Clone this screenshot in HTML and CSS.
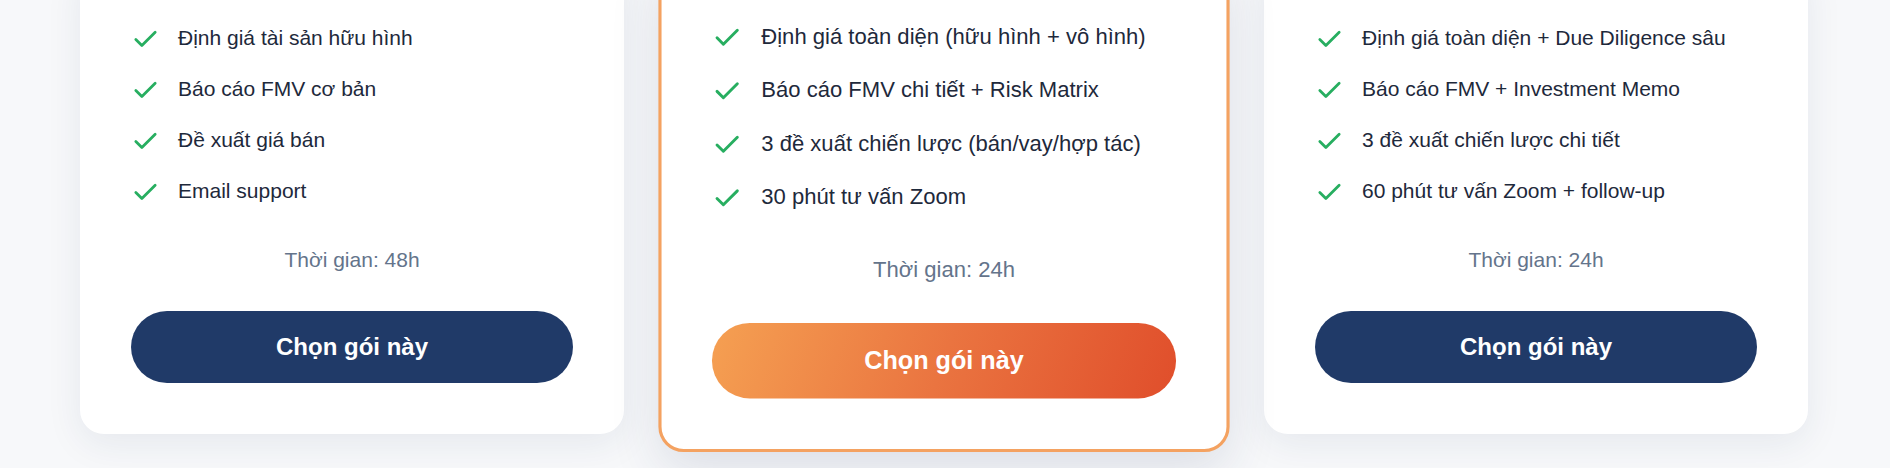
FILE: index.html
```html
<!DOCTYPE html>
<html lang="vi">
<head>
<meta charset="utf-8">
<title>Bảng giá</title>
<link rel="stylesheet" href="styles.css">
</head>
<body>
<section class="pricing">
  <div class="grid">
    <div class="card">
      <ul class="features">
        <li><svg class="check" viewBox="0 0 24 24"><path d="M20 6 9 17l-5-5"/></svg><span>Định giá tài sản hữu hình</span></li>
        <li><svg class="check" viewBox="0 0 24 24"><path d="M20 6 9 17l-5-5"/></svg><span>Báo cáo FMV cơ bản</span></li>
        <li><svg class="check" viewBox="0 0 24 24"><path d="M20 6 9 17l-5-5"/></svg><span>Đề xuất giá bán</span></li>
        <li><svg class="check" viewBox="0 0 24 24"><path d="M20 6 9 17l-5-5"/></svg><span>Email support</span></li>
      </ul>
      <p class="time">Thời gian: 48h</p>
      <button class="btn">Chọn gói này</button>
    </div>
    <div class="card featured">
      <ul class="features">
        <li><svg class="check" viewBox="0 0 24 24"><path d="M20 6 9 17l-5-5"/></svg><span>Định giá toàn diện (hữu hình + vô hình)</span></li>
        <li><svg class="check" viewBox="0 0 24 24"><path d="M20 6 9 17l-5-5"/></svg><span>Báo cáo FMV chi tiết + Risk Matrix</span></li>
        <li><svg class="check" viewBox="0 0 24 24"><path d="M20 6 9 17l-5-5"/></svg><span>3 đề xuất chiến lược (bán/vay/hợp tác)</span></li>
        <li><svg class="check" viewBox="0 0 24 24"><path d="M20 6 9 17l-5-5"/></svg><span>30 phút tư vấn Zoom</span></li>
      </ul>
      <p class="time">Thời gian: 24h</p>
      <button class="btn btn-accent">Chọn gói này</button>
    </div>
    <div class="card">
      <ul class="features">
        <li><svg class="check" viewBox="0 0 24 24"><path d="M20 6 9 17l-5-5"/></svg><span>Định giá toàn diện + Due Diligence sâu</span></li>
        <li><svg class="check" viewBox="0 0 24 24"><path d="M20 6 9 17l-5-5"/></svg><span>Báo cáo FMV + Investment Memo</span></li>
        <li><svg class="check" viewBox="0 0 24 24"><path d="M20 6 9 17l-5-5"/></svg><span>3 đề xuất chiến lược chi tiết</span></li>
        <li><svg class="check" viewBox="0 0 24 24"><path d="M20 6 9 17l-5-5"/></svg><span>60 phút tư vấn Zoom + follow-up</span></li>
      </ul>
      <p class="time">Thời gian: 24h</p>
      <button class="btn">Chọn gói này</button>
    </div>
  </div>
</section>
</body>
</html>
```

FILE: styles.css
```css
* {
  box-sizing: border-box;
}

html, body {
  margin: 0;
  padding: 0;
}

body {
  background: #f7f8fa;
  font-family: "Liberation Sans", Arial, sans-serif;
  color: #1e293b;
  overflow: hidden;
  height: 468px;
}

.pricing {
  padding: 0 82px 0 80px;
}

.grid {
  display: grid;
  grid-template-columns: repeat(3, 1fr);
  gap: 48px;
  margin-top: -39px;
}

.card {
  background: #ffffff;
  border: 3px solid #ffffff;
  border-radius: 24px;
  padding: 48px;
  box-shadow: 0 10px 36px rgba(30, 50, 90, 0.08);
  display: flex;
  flex-direction: column;
}

.card.featured {
  border-color: #f4a261;
  transform: scale(1.05);
  transform-origin: 50% 112px;
  box-shadow: 0 18px 48px rgba(30, 50, 90, 0.12);
  position: relative;
  z-index: 1;
}

.features {
  list-style: none;
  margin: 0;
  padding: 0;
}

.features li {
  display: flex;
  align-items: flex-start;
  gap: 18px;
  padding: 9px 0;
  font-size: 21px;
  line-height: 33px;
}

.check {
  flex: 0 0 29px;
  width: 29px;
  height: 29px;
  margin-top: 4px;
  fill: none;
  stroke: #27ae60;
  stroke-width: 2.3;
  stroke-linecap: round;
  stroke-linejoin: round;
}

.time {
  margin: 32px 0 0;
  text-align: center;
  font-size: 21px;
  color: #64748b;
}

.btn {
  margin-top: 39px;
  display: block;
  width: 100%;
  border: none;
  border-radius: 999px;
  padding: 22px 0;
  font-family: "Liberation Sans", Arial, sans-serif;
  font-size: 24px;
  font-weight: 700;
  color: #ffffff;
  background: #203a68;
  cursor: pointer;
}

.btn-accent {
  background: linear-gradient(110deg, #f5a052 0%, #ea7440 50%, #e04e2b 100%);
}
```
